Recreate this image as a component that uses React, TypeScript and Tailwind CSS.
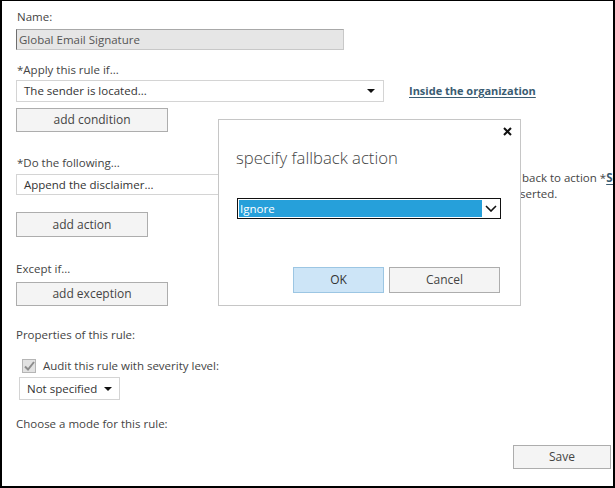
import React from 'react';

const font = { fontFamily: '"Open Sans", "Noto Sans", sans-serif' };

const Label: React.FC<{ children: React.ReactNode; className?: string }> = ({ children, className = '' }) => (
    <div className={`h-4 leading-4 text-[11.5px] text-[#444] whitespace-nowrap ${className}`}>{children}</div>
);

const GrayButton: React.FC<{ label: string; className?: string }> = ({ label, className = '' }) => (
    <button className={`flex items-center justify-center border border-[#adadad] bg-[#f4f4f4] text-[12px] text-[#444] ${className}`}>
        {label}
    </button>
);

const Caret = () => (
    <svg width="8" height="4" viewBox="0 0 8 4" className="shrink-0">
        <path d="M0 0h8L4 4z" fill="#111" />
    </svg>
);

const App: React.FC = () => {
    return (
        <div style={font} className="relative w-[615px] h-[488px] overflow-hidden bg-white border-l-2 border-r-2 border-t border-b-2 border-black">
            <div className="flex flex-col pl-[14px] pt-[8px]">
                <Label className="pl-[1px]">Name:</Label>
                <div className="mt-1 h-[21px] w-[328px] bg-[#e6e6e6] border border-[#c8c8c8] border-l-[#6e6e6e] border-t-[#a8a8a8] pl-[2px] flex items-center text-[11.5px] text-[#555]">
                    Global Email Signature
                </div>

                <Label className="mt-[12px] pl-[1px]">*Apply this rule if...</Label>
                <div className="mt-[2px] flex items-center">
                    <div className="shrink-0 h-[22px] w-[368px] border border-[#d4d4d4] flex items-center justify-between pl-[7px] pr-[8px] text-[11.5px] text-[#333]">
                        <span>The sender is located...</span>
                        <Caret />
                    </div>
                    <a className="ml-[25px] text-[11px] font-bold text-[#3a5c72] underline underline-offset-2 whitespace-nowrap">Inside the organization</a>
                </div>
                <GrayButton label="add condition" className="mt-[6px] h-[24px] w-[152px]" />

                <Label className="mt-[23px] pl-[1px]">*Do the following...</Label>
                <div className="mt-[3px] h-[21px] flex items-start">
                    <div className="shrink-0 h-[21px] w-[368px] border border-[#d4d4d4] flex items-center pl-[7px] text-[11.5px] text-[#333]">
                        Append the disclaimer...
                    </div>
                    <div className="shrink-0 ml-[136px] -mt-[4px] flex flex-col text-[11.5px] text-[#444] leading-4 whitespace-nowrap">
                        <span className="pl-[2px]">
                            back to action *<a className="font-bold text-[#3a5c72] underline underline-offset-2">Select one</a>
                        </span>
                        <span>serted.</span>
                    </div>
                </div>
                <GrayButton label="add action" className="mt-[17px] h-[25px] w-[132px]" />

                <Label className="mt-[24px]">Except if...</Label>
                <GrayButton label="add exception" className="mt-[5px] h-[24px] w-[152px]" />

                <Label className="mt-[21px]">Properties of this rule:</Label>
                <div className="mt-[15px] h-4 flex items-center">
                    <div className="ml-[6px] w-[14px] h-[14px] border border-[#b5b5b5] bg-[#e2e2e2] flex items-center justify-center">
                        <svg width="11" height="10" viewBox="0 0 11 10">
                            <path d="M1 5.5l3 3L10 1" stroke="#8c8c8c" strokeWidth="2" fill="none" />
                        </svg>
                    </div>
                    <span className="ml-[7px] text-[11.5px] text-[#444]">Audit this rule with severity level:</span>
                </div>
                <div className="mt-[3px] ml-[3px] h-[23px] w-[101px] border border-[#d4d4d4] flex items-center justify-between pl-[7px] pr-[7px] text-[11.5px] text-[#333]">
                    <span>Not specified</span>
                    <Caret />
                </div>

                <Label className="mt-[16px]">Choose a mode for this rule:</Label>
                <div className="mt-[13px] flex justify-end pr-[2px]">
                    <GrayButton label="Save" className="h-[24px] w-[98px]" />
                </div>
            </div>

            {/* fallback dialog */}
            <div className="absolute left-[216px] top-[118px] w-[303px] h-[187px] bg-white border border-[#c6c6c6] flex flex-col">
                <div className="flex justify-end pr-[8px] pt-[7px] h-[18px]">
                    <svg width="9" height="9" viewBox="0 0 9 9">
                        <path d="M1 1l7 7M8 1L1 8" stroke="#111" strokeWidth="2" />
                    </svg>
                </div>
                <div className="ml-[17px] mt-[8px] text-[16.7px] font-light text-[#444] leading-6">specify fallback action</div>
                <div className="ml-[18px] mt-[28px] h-[21px] w-[264px] border border-[#111] flex items-stretch p-[1px]">
                    <div className="flex-1 bg-[#26a0da] text-white text-[11.5px] leading-[17px] pl-[1px]">Ignore</div>
                    <div className="w-[17px] flex items-center justify-center">
                        <svg width="12" height="7" viewBox="0 0 12 7">
                            <path d="M1 1l5 5 5-5" stroke="#111" strokeWidth="1.6" fill="none" />
                        </svg>
                    </div>
                </div>
                <div className="mt-[48px] flex justify-end gap-[5px] pr-[20px]">
                    <button className="h-[26px] w-[91px] border border-[#9cc6e3] bg-[#cde5f7] text-[12px] text-[#333]">OK</button>
                    <button className="h-[26px] w-[111px] border border-[#adadad] bg-[#f4f4f4] text-[12px] text-[#444]">Cancel</button>
                </div>
            </div>
        </div>
    );
};

export default App;
